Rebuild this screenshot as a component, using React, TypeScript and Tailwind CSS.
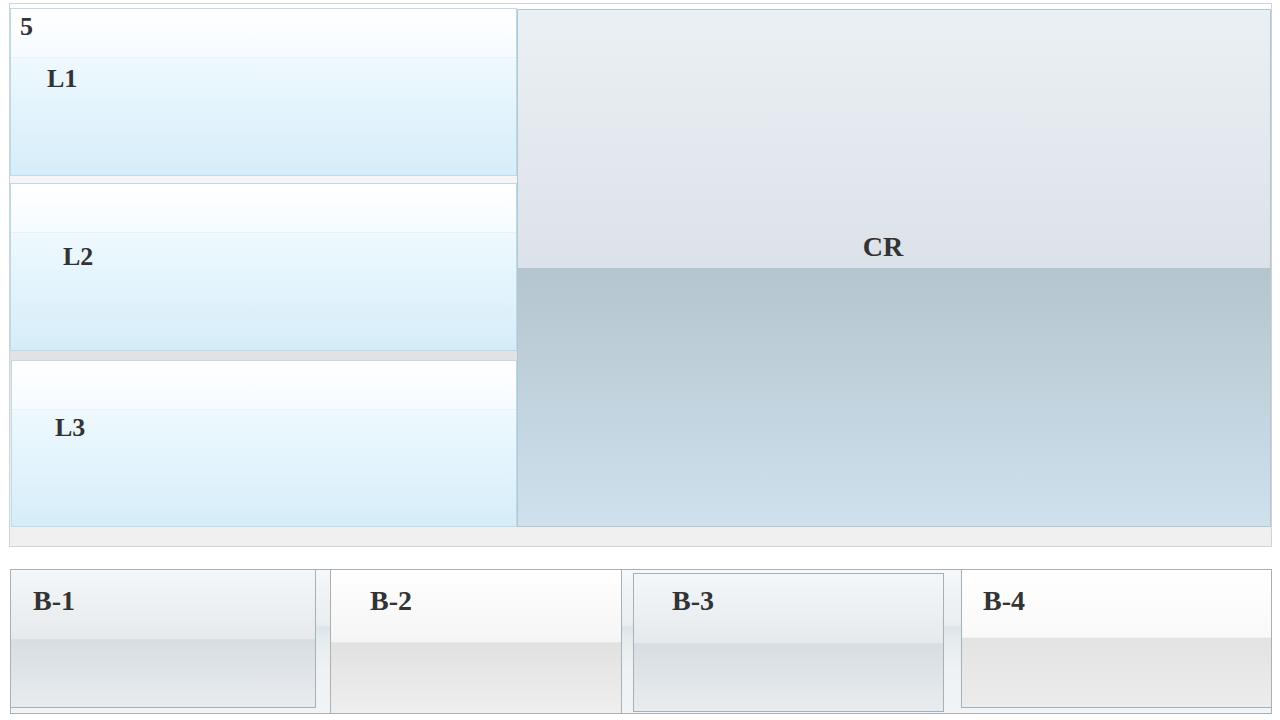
const serif = { fontFamily: '"Liberation Serif", "Times New Roman", serif' }

const LeftPanel = ({ label, top, bodyPad, className }: { label: string; top?: string; bodyPad: string; className: string }) => {
    return (
        <div className={`flex flex-col border border-[#b9dcec] ${className}`}>
            <div className="h-[49px] shrink-0 border-b border-[#e4f2fa] bg-gradient-to-b from-white to-[#f6fbfe]">
                {top && <div className="pl-[9px] pt-[5px] text-[26px] leading-none font-bold text-[#333]">{top}</div>}
            </div>
            <div className={`flex-1 bg-gradient-to-b from-[#eff9fe] to-[#d5edf9] ${bodyPad}`}>
                <div className="text-[26px] leading-none font-bold text-[#333]">{label}</div>
            </div>
        </div>
    )
}

export default function App() {
    return (
        <div className="w-[1280px] h-[720px] bg-white overflow-hidden" style={serif}>
            <div className="ml-[9px] mt-[3px] w-[1263px] h-[544px] border border-[#d2d2d2] bg-[linear-gradient(to_bottom,#ffffff_0%,#f6f4f4_32%,#e2e2e2_65%,#eeeeee_80%,#f0f0f0_100%)] flex">
                <div className="w-[507px] flex flex-col">
                    <LeftPanel label="L1" top="5" bodyPad="pt-[8px] pl-[36px]" className="mt-[4px] h-[168px]" />
                    <LeftPanel label="L2" bodyPad="pt-[11px] pl-[52px]" className="mt-[7px] h-[168px]" />
                    <LeftPanel label="L3" bodyPad="pt-[5px] pl-[43px]" className="mt-[9px] ml-[1px] h-[167px]" />
                </div>
                <div className="w-[754px] mt-[5px] h-[518px] border border-[#b3c7d3] flex flex-col">
                    <div className="h-[258px] bg-gradient-to-b from-[#ebf0f4] to-[#dce2e9] flex items-end justify-center pb-[7px] pr-[22px]">
                        <div className="text-[28px] leading-none font-bold text-[#333]">CR</div>
                    </div>
                    <div className="flex-1 bg-gradient-to-b from-[#b5c5cf] to-[#cee1ed]"></div>
                </div>
            </div>

            <div className="ml-[10px] mt-[22px] w-[1262px] h-[145px] border border-[#a9b0b6] flex bg-[linear-gradient(to_bottom,#f5f7f9_0%,#e9eef1_38%,#dde4e9_40%,#e6ebee_48%,#eef2f5_70%,#f1f4f6_100%)]">
                <div className="w-[319px] shrink-0">
                    <div className="w-[305px] h-[138px] border-r border-b border-[#a5b0b8] bg-[linear-gradient(to_bottom,#f4f7f9_0%,#e6eaed_50%,#d7dde2_51%,#e8ecef_100%)] pl-[22px] pt-[17px]">
                        <div className="text-[28px] leading-none font-bold text-[#333]">B-1</div>
                    </div>
                </div>
                <div className="w-[292px] shrink-0 border-x border-[#a9b0b6] bg-[linear-gradient(to_bottom,#ffffff_0%,#f5f5f5_50%,#e1e1e1_51%,#efefef_100%)] pl-[39px] pt-[17px]">
                    <div className="text-[28px] leading-none font-bold text-[#333]">B-2</div>
                </div>
                <div className="w-[339px] shrink-0 pl-[11px] pt-[3px]">
                    <div className="w-[311px] h-[139px] border border-[#a5b0b8] bg-[linear-gradient(to_bottom,#f4f7f9_0%,#e6eaed_50%,#d7dde2_51%,#e8ecef_100%)] pl-[38px] pt-[13px]">
                        <div className="text-[28px] leading-none font-bold text-[#333]">B-3</div>
                    </div>
                </div>
                <div className="flex-1">
                    <div className="h-[138px] border-l border-b border-[#a5b0b8] bg-[linear-gradient(to_bottom,#ffffff_0%,#f9f9f9_49%,#e3e3e3_50%,#ececec_100%)] pl-[21px] pt-[17px]">
                        <div className="text-[28px] leading-none font-bold text-[#333]">B-4</div>
                    </div>
                </div>
            </div>
        </div>
    )
}
